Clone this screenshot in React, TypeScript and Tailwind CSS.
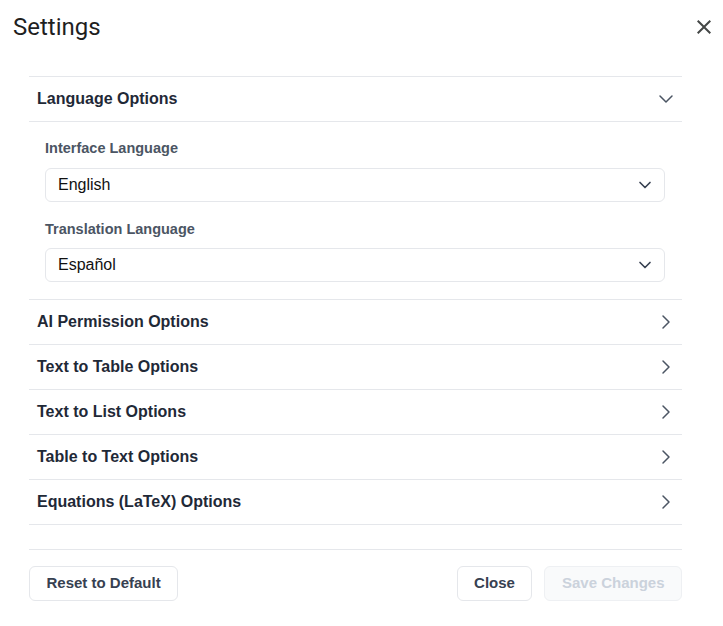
import { ChevronDown, ChevronRight } from "lucide-react";

const sections = [
    "AI Permission Options",
    "Text to Table Options",
    "Text to List Options",
    "Table to Text Options",
    "Equations (LaTeX) Options",
];

const sans = "font-['Liberation_Sans',Arial,sans-serif]";

function SelectBox({ value }: { value: string }) {
    return (
        <div className="flex h-[34px] items-center justify-between rounded-md border border-[#e5e7eb] bg-white pl-3 pr-[9px]">
            <span className="text-[16px] text-[#111111]">{value}</span>
            <ChevronDown className="h-5 w-5 text-[#374151]" strokeWidth={2} />
        </div>
    );
}

export default function App() {
    return (
        <div className={`min-h-[626px] w-full bg-white ${sans}`}>
            <div className="flex h-8 items-center justify-between pl-[13px] pr-[7px] pt-[11px] box-content">
                <h1 className="font-['Roboto',sans-serif] text-[24px] leading-8 font-normal text-[#1f1f1f]">Settings</h1>
                <svg viewBox="0 0 24 24" className="h-6 w-6 fill-[#444746]">
                    <path d="M19 6.41 17.59 5 12 10.59 6.41 5 5 6.41 10.59 12 5 17.59 6.41 19 12 13.41 17.59 19 19 17.59 13.41 12z" />
                </svg>
            </div>

            <div className="mt-[33px] pl-[29px] pr-[41px]">
                <div className="border-t border-[#e5e7eb]">
                    <div className="border-b border-[#e5e7eb]">
                        <div className="flex h-11 items-center justify-between pl-2 pr-1">
                            <span className="text-[16px] font-bold text-[#1f2937]">Language Options</span>
                            <ChevronDown className="h-6 w-6 text-[#4b5563]" strokeWidth={1.5} />
                        </div>
                    </div>
                    <div className="border-b border-[#e5e7eb] pl-4 pr-[17px] pt-4 pb-[17px]">
                        <div className="mb-[10px] text-[14.5px] leading-5 font-bold text-[#4b5563]">Interface Language</div>
                        <SelectBox value="English" />
                        <div className="mt-[17px] mb-[9px] text-[14.5px] leading-5 font-bold text-[#4b5563]">Translation Language</div>
                        <SelectBox value="Español" />
                    </div>
                    {sections.map((s) => (
                        <div key={s} className="flex h-[45px] items-center justify-between border-b border-[#e5e7eb] pl-2 pr-1">
                            <span className="text-[16px] font-bold text-[#1f2937]">{s}</span>
                            <ChevronRight className="h-6 w-6 text-[#4b5563]" strokeWidth={1.5} />
                        </div>
                    ))}
                </div>

                <div className="mt-6 flex items-center justify-between border-t border-[#e5e7eb] pt-4">
                    <button className="h-[35px] rounded-md border border-[#e5e7eb] bg-white px-[16.5px] text-[15px] font-bold text-[#374151]">
                        Reset to Default
                    </button>
                    <div className="flex gap-3">
                        <button className="h-[35px] rounded-md border border-[#e5e7eb] bg-white px-[16.5px] text-[15px] font-bold text-[#374151]">
                            Close
                        </button>
                        <button disabled className="h-[35px] rounded-md border border-[#eef0f3] bg-[#f9fafb] px-[16.5px] text-[15px] font-bold text-[#cbd2dc]">
                            Save Changes
                        </button>
                    </div>
                </div>
            </div>
        </div>
    );
}
